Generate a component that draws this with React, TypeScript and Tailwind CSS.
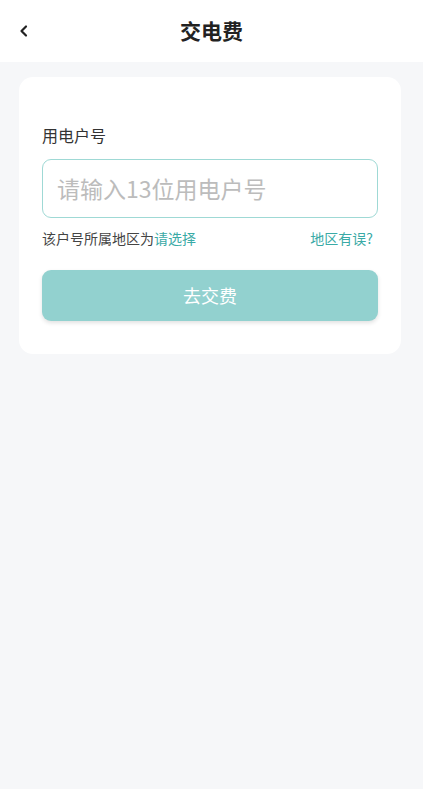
import React from 'react';

const font = { fontFamily: '"Noto Sans CJK SC", "Noto Sans", sans-serif' };

export default function App() {
  return (
    <div className="min-h-[789px] w-full bg-[#f6f7f9]" style={font}>
      <header className="relative flex h-[62px] items-center justify-center bg-white">
        <button className="absolute left-[16px] top-1/2 flex size-[16px] -translate-y-1/2 items-center justify-center">
          <svg viewBox="0 0 16 16" className="size-[16px]" fill="none">
            <path d="M10 3.5 5.5 8l4.5 4.5" stroke="#222" strokeWidth="2.2" strokeLinecap="round" strokeLinejoin="round" />
          </svg>
        </button>
        <h1 className="text-[21px] font-bold text-[#222]">交电费</h1>
      </header>

      <main className="px-[19px] pt-[15px] pr-[22px]">
        <div className="rounded-[14px] bg-white px-[23px] pb-[33px] pt-[46px]">
          <label className="block text-[16px] leading-[24px] text-[#333]">用电户号</label>
          <div className="mt-[12px] flex h-[59px] items-center rounded-[9px] border border-[#9fd9d5] px-[14px]">
            <input
              className="w-full bg-transparent text-[23px] text-[#333] outline-none placeholder:text-[#bcbcbc]"
              placeholder="请输入13位用电户号"
              type="text"
            />
          </div>
          <div className="mt-[10px] flex items-center justify-between text-[14px] leading-[20px]">
            <span className="text-[#444]">
              该户号所属地区为<span className="text-[#3aaaa6]">请选择</span>
            </span>
            <span className="pr-[5px] text-[#3aaaa6]">地区有误?</span>
          </div>
          <button className="mt-[22px] flex h-[51px] w-full items-center justify-center rounded-[9px] bg-[#92d1cf] text-[18px] text-white shadow-[0_2px_4px_rgba(0,0,0,0.12)]">
            去交费
          </button>
        </div>
      </main>
    </div>
  );
}
